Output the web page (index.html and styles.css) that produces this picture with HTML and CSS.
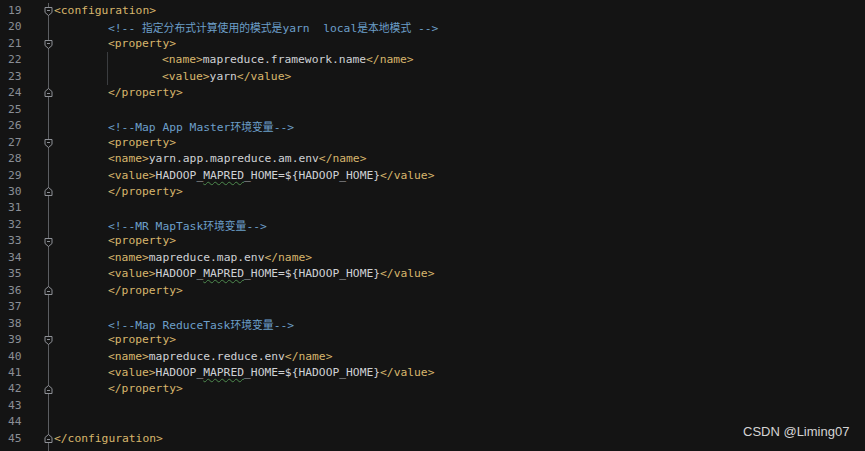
FILE: index.html
```html
<!DOCTYPE html>
<html>
<head>
<meta charset="utf-8">
<link rel="stylesheet" href="styles.css">
</head>
<body>
<div class="editor">
  <div class="row"><span class="num">19</span><span class="fold"><svg class="mk" viewBox="0 0 9 10"><path d="M1 1.5h7v5l-3.5 3l-3.5-3z"/><path d="M3 4.5h3"/></svg></span><span class="code"><span class="t">&lt;configuration&gt;</span></span></div>
  <div class="row"><span class="num">20</span><span class="fold"></span><span class="code"><span class="i1"></span><span class="c">&lt;!-- <span class="cjk">指定分布式计算使用的模式是</span>yarn  local<span class="cjk">是本地模式</span> --&gt;</span></span></div>
  <div class="row"><span class="num">21</span><span class="fold"><svg class="mk" viewBox="0 0 9 10"><path d="M1 1.5h7v5l-3.5 3l-3.5-3z"/><path d="M3 4.5h3"/></svg></span><span class="code"><span class="i1"></span><span class="t">&lt;property&gt;</span></span></div>
  <div class="row"><span class="num">22</span><span class="fold"></span><span class="code"><span class="i1 guide"></span><span class="i1"></span><span class="t">&lt;name&gt;</span>mapreduce.framework.name<span class="t">&lt;/name&gt;</span></span></div>
  <div class="row"><span class="num">23</span><span class="fold"></span><span class="code"><span class="i1 guide"></span><span class="i1"></span><span class="t">&lt;value&gt;</span>yarn<span class="t">&lt;/value&gt;</span></span></div>
  <div class="row"><span class="num">24</span><span class="fold"><svg class="mk" viewBox="0 0 9 10"><path d="M1 8.5h7v-5l-3.5-3l-3.5 3z"/><path d="M3 5.5h3"/></svg></span><span class="code"><span class="i1"></span><span class="t">&lt;/property&gt;</span></span></div>
  <div class="row"><span class="num">25</span><span class="fold"></span><span class="code"></span></div>
  <div class="row"><span class="num">26</span><span class="fold"></span><span class="code"><span class="i1"></span><span class="c">&lt;!--Map App Master<span class="cjk">环境变量</span>--&gt;</span></span></div>
  <div class="row"><span class="num">27</span><span class="fold"><svg class="mk" viewBox="0 0 9 10"><path d="M1 1.5h7v5l-3.5 3l-3.5-3z"/><path d="M3 4.5h3"/></svg></span><span class="code"><span class="i1"></span><span class="t">&lt;property&gt;</span></span></div>
  <div class="row"><span class="num">28</span><span class="fold"></span><span class="code"><span class="i1"></span><span class="t">&lt;name&gt;</span>yarn.app.mapreduce.am.env<span class="t">&lt;/name&gt;</span></span></div>
  <div class="row"><span class="num">29</span><span class="fold"></span><span class="code"><span class="i1"></span><span class="t">&lt;value&gt;</span>HADOOP_<span class="typo">MAPRED</span>_HOME=${HADOOP_HOME}<span class="t">&lt;/value&gt;</span></span></div>
  <div class="row"><span class="num">30</span><span class="fold"><svg class="mk" viewBox="0 0 9 10"><path d="M1 8.5h7v-5l-3.5-3l-3.5 3z"/><path d="M3 5.5h3"/></svg></span><span class="code"><span class="i1"></span><span class="t">&lt;/property&gt;</span></span></div>
  <div class="row"><span class="num">31</span><span class="fold"></span><span class="code"></span></div>
  <div class="row"><span class="num">32</span><span class="fold"></span><span class="code"><span class="i1"></span><span class="c">&lt;!--MR MapTask<span class="cjk">环境变量</span>--&gt;</span></span></div>
  <div class="row"><span class="num">33</span><span class="fold"><svg class="mk" viewBox="0 0 9 10"><path d="M1 1.5h7v5l-3.5 3l-3.5-3z"/><path d="M3 4.5h3"/></svg></span><span class="code"><span class="i1"></span><span class="t">&lt;property&gt;</span></span></div>
  <div class="row"><span class="num">34</span><span class="fold"></span><span class="code"><span class="i1"></span><span class="t">&lt;name&gt;</span>mapreduce.map.env<span class="t">&lt;/name&gt;</span></span></div>
  <div class="row"><span class="num">35</span><span class="fold"></span><span class="code"><span class="i1"></span><span class="t">&lt;value&gt;</span>HADOOP_<span class="typo">MAPRED</span>_HOME=${HADOOP_HOME}<span class="t">&lt;/value&gt;</span></span></div>
  <div class="row"><span class="num">36</span><span class="fold"><svg class="mk" viewBox="0 0 9 10"><path d="M1 8.5h7v-5l-3.5-3l-3.5 3z"/><path d="M3 5.5h3"/></svg></span><span class="code"><span class="i1"></span><span class="t">&lt;/property&gt;</span></span></div>
  <div class="row"><span class="num">37</span><span class="fold"></span><span class="code"></span></div>
  <div class="row"><span class="num">38</span><span class="fold"></span><span class="code"><span class="i1"></span><span class="c">&lt;!--Map ReduceTask<span class="cjk">环境变量</span>--&gt;</span></span></div>
  <div class="row"><span class="num">39</span><span class="fold"><svg class="mk" viewBox="0 0 9 10"><path d="M1 1.5h7v5l-3.5 3l-3.5-3z"/><path d="M3 4.5h3"/></svg></span><span class="code"><span class="i1"></span><span class="t">&lt;property&gt;</span></span></div>
  <div class="row"><span class="num">40</span><span class="fold"></span><span class="code"><span class="i1"></span><span class="t">&lt;name&gt;</span>mapreduce.reduce.env<span class="t">&lt;/name&gt;</span></span></div>
  <div class="row"><span class="num">41</span><span class="fold"></span><span class="code"><span class="i1"></span><span class="t">&lt;value&gt;</span>HADOOP_<span class="typo">MAPRED</span>_HOME=${HADOOP_HOME}<span class="t">&lt;/value&gt;</span></span></div>
  <div class="row"><span class="num">42</span><span class="fold"><svg class="mk" viewBox="0 0 9 10"><path d="M1 8.5h7v-5l-3.5-3l-3.5 3z"/><path d="M3 5.5h3"/></svg></span><span class="code"><span class="i1"></span><span class="t">&lt;/property&gt;</span></span></div>
  <div class="row"><span class="num">43</span><span class="fold"></span><span class="code"></span></div>
  <div class="row"><span class="num">44</span><span class="fold"></span><span class="code"></span></div>
  <div class="row"><span class="num">45</span><span class="fold"><svg class="mk" viewBox="0 0 9 10"><path d="M1 8.5h7v-5l-3.5-3l-3.5 3z"/><path d="M3 5.5h3"/></svg></span><span class="code"><span class="t">&lt;/configuration&gt;</span></span></div>
  <div class="row"><span class="num"></span><span class="fold"></span><span class="code"></span></div>
</div>
<div class="watermark">CSDN @Liming07</div>
</body>
</html>
```
FILE: styles.css
```css
html, body {
  margin: 0;
  padding: 0;
  background: #141414;
  height: 100%;
  overflow: hidden;
}
.editor {
  padding-top: 3px;
  font-family: "DejaVu Sans Mono", "Liberation Mono", "Noto Sans CJK SC", monospace;
  font-size: 11.3px;
  color: #cfd1d4;
}
.row {
  display: flex;
  height: 16.46px;
  line-height: 16.46px;
  white-space: pre;
}
.num {
  width: 44px;
  box-sizing: border-box;
  padding-left: 8px;
  color: #8a8e95;
  flex: none;
}
.fold {
  width: 10px;
  flex: none;
  display: flex;
  align-items: center;
  justify-content: center;
  background: linear-gradient(to right, transparent 4px, #5c5e62 4px, #5c5e62 5px, transparent 5px);
}
.mk {
  width: 9px;
  height: 10px;
  margin-left: -1px;
  fill: #141414;
  stroke: #8e9197;
  stroke-width: 1;
}
.code {
  display: flex;
  align-items: stretch;
}
.i1 {
  display: inline-block;
  width: 54px;
  flex: none;
}
.guide {
  background: linear-gradient(to right, transparent 53px, #3b3d40 53px, #3b3d40 54px, transparent 54px);
}
.t { color: #d8b66c; }
.c { color: #6c9fc9; }
.cjk {
  font-family: "Noto Sans CJK SC", sans-serif;
  font-size: 10.8px;
}
.typo {
  text-decoration: underline wavy #4e8a4e;
  text-decoration-thickness: 1px;
  text-underline-offset: 2px;
}
.watermark {
  position: absolute;
  left: 743px;
  top: 424px;
  font-family: "Liberation Sans", Arial, sans-serif;
  font-size: 13px;
  color: #d4d4d4;
}
```
